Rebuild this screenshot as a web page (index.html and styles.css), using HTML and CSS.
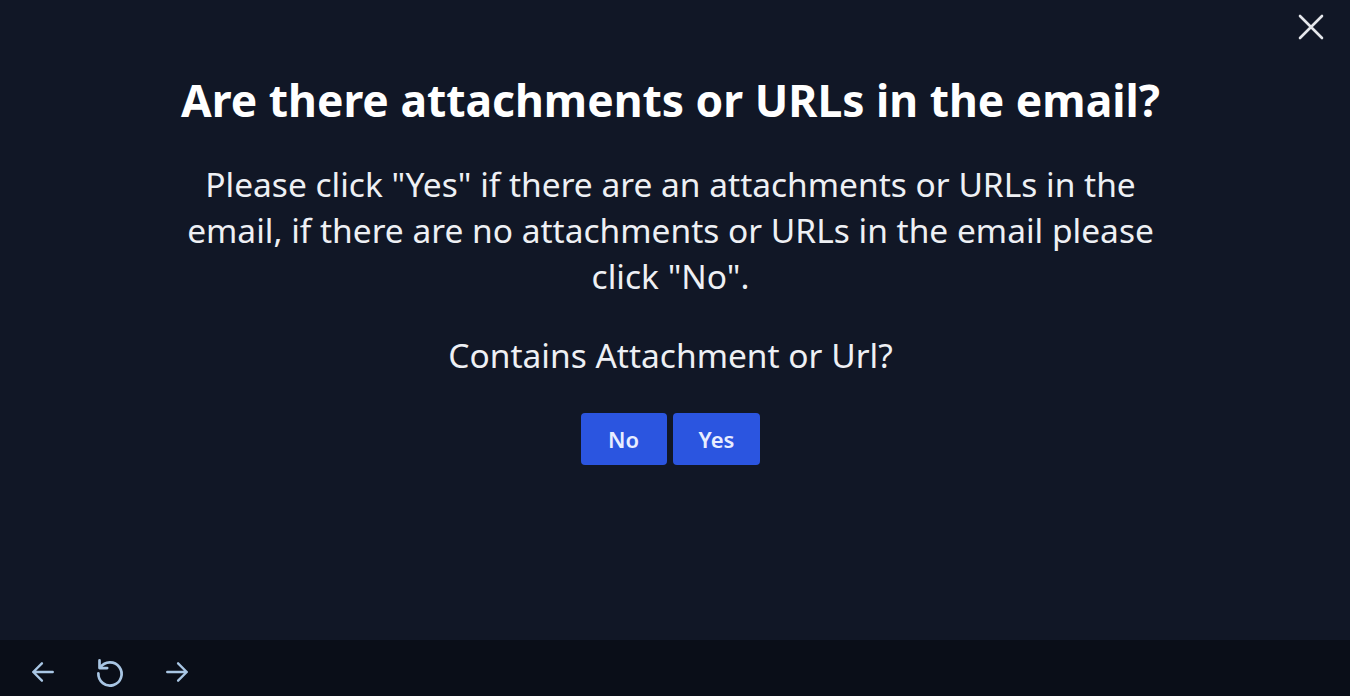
FILE: index.html
```html
<!DOCTYPE html>
<html lang="en">
<head>
<meta charset="utf-8">
<title>Question</title>
<link rel="stylesheet" href="styles.css">
</head>
<body>
<div class="app">
  <main class="stage">
    <button class="close" aria-label="Close">
      <svg width="26" height="26" viewBox="0 0 26 26" fill="none" stroke="currentColor" stroke-width="2.6" stroke-linecap="round"><path d="M2 2L24 24M24 2L2 24"/></svg>
    </button>
    <section class="card">
      <h1 class="title">Are there attachments or URLs in the email?</h1>
      <p class="desc">Please click "Yes" if there are an attachments or URLs in the email, if there are no attachments or URLs in the email please click "No".</p>
      <p class="question">Contains Attachment or Url?</p>
      <div class="actions">
        <button class="btn">No</button>
        <button class="btn">Yes</button>
      </div>
    </section>
  </main>
  <footer class="bar">
    <button class="nav" aria-label="Back">
      <svg width="26" height="26" viewBox="0 0 24 24" fill="none" stroke="currentColor" stroke-width="2.2" stroke-linecap="round" stroke-linejoin="round"><path d="M21 12H3M11 4l-8 8 8 8"/></svg>
    </button>
    <button class="nav" aria-label="Reload">
      <svg width="34" height="34" viewBox="0 0 24 24" fill="none" stroke="currentColor" stroke-width="1.9" stroke-linecap="round" stroke-linejoin="round"><path d="M5.2 8.8A8.2 8.2 0 1 1 3.8 13"/><path d="M4.6 3.8v5.4h5.4"/></svg>
    </button>
    <button class="nav" aria-label="Forward">
      <svg width="26" height="26" viewBox="0 0 24 24" fill="none" stroke="currentColor" stroke-width="2.2" stroke-linecap="round" stroke-linejoin="round"><path d="M3 12h18M13 4l8 8-8 8"/></svg>
    </button>
  </footer>
</div>
</body>
</html>
```

FILE: styles.css
```css
* { box-sizing: border-box; }
html, body { margin: 0; height: 100%; }
body {
  background: #111726;
  font-family: "Noto Sans", "Open Sans", sans-serif;
  color: #eef0f4;
}
.app {
  display: flex;
  flex-direction: column;
  height: 696px;
}
.stage {
  position: relative;
  flex: 1;
  display: flex;
  justify-content: center;
  padding-right: 9px;
}
.close {
  position: absolute;
  top: 14px;
  right: 26px;
  background: none;
  border: 0;
  padding: 0;
  color: #e5e7eb;
  display: flex;
}
.card {
  width: 1100px;
  padding-top: 72px;
  text-align: center;
  display: flex;
  flex-direction: column;
  align-items: center;
}
.title {
  margin: 0;
  font-size: 44.4px;
  font-weight: 700;
  line-height: 56px;
  color: #ffffff;
}
.desc {
  margin: 33px 0 0;
  width: 980px;
  font-size: 33.5px;
  line-height: 46px;
}
.question {
  margin: 33px 0 0;
  font-size: 33.5px;
  line-height: 46px;
}
.actions {
  margin-top: 35px;
  display: flex;
  gap: 6px;
}
.btn {
  height: 52px;
  min-width: 86px;
  padding: 0 26px;
  border: 0;
  border-radius: 4px;
  background: #2b55e0;
  color: #e8edff;
  font-family: inherit;
  font-size: 22px;
  font-weight: 600;
}
.bar {
  height: 56px;
  background: #0a0e18;
  display: flex;
  align-items: center;
  padding: 8px 0 0 30px;
  gap: 37px;
}
.nav {
  background: none;
  border: 0;
  padding: 0;
  color: #a9c6e4;
  display: flex;
}
```
